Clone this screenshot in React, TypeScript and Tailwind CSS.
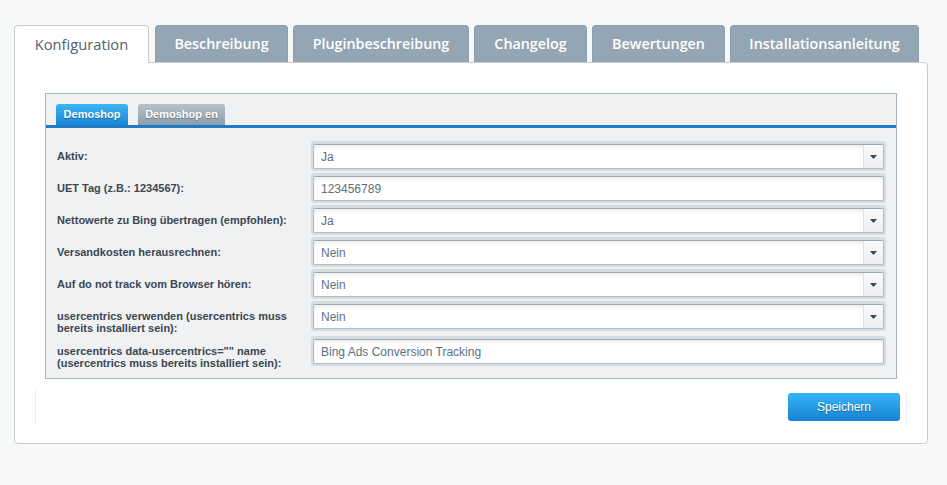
import React from "react";

const tabs = [
  { label: "Beschreibung", w: "w-[133px]" },
  { label: "Pluginbeschreibung", w: "w-[176px]" },
  { label: "Changelog", w: "w-[113px]" },
  { label: "Bewertungen", w: "w-[133px]" },
  { label: "Installationsanleitung", w: "w-[189px]" },
];

type Row = { label: string[]; value: string; select: boolean };

const rows: Row[] = [
  { label: ["Aktiv:"], value: "Ja", select: true },
  { label: ["UET Tag (z.B.: 1234567):"], value: "123456789", select: false },
  { label: ["Nettowerte zu Bing übertragen (empfohlen):"], value: "Ja", select: true },
  { label: ["Versandkosten herausrechnen:"], value: "Nein", select: true },
  { label: ["Auf do not track vom Browser hören:"], value: "Nein", select: true },
  {
    label: ["usercentrics verwenden (usercentrics muss", "bereits installiert sein):"],
    value: "Nein",
    select: true,
  },
  {
    label: ['usercentrics data-usercentrics="" name', "(usercentrics muss bereits installiert sein):"],
    value: "Bing Ads Conversion Tracking",
    select: false,
  },
];

function Field({ value, select }: { value: string; select: boolean }) {
  return (
    <div className="flex-1 rounded-[3px] bg-[#d7dce1] px-[2px] pt-[3px] pb-[2px]">
      <div className="flex h-[25px] items-stretch overflow-hidden rounded-[2px] border border-[#b3bdc7] border-t-[#9eabb7] bg-white shadow-[inset_0_2px_3px_rgba(0,0,0,0.08)]">
        <div className="flex flex-1 items-center pl-[7px] text-[12px] text-[#5e6f80]">{value}</div>
        {select && (
          <div className="flex w-[20px] items-center justify-center border-l border-[#dfe3e7] bg-gradient-to-b from-[#fbfbfb] to-[#ebedef]">
            <svg width="7" height="4" viewBox="0 0 7 4">
              <path d="M0 0 H7 L3.5 4 Z" fill="#40464d" />
            </svg>
          </div>
        )}
      </div>
    </div>
  );
}

export default function App() {
  return (
    <div
      className="min-h-[485px] w-[947px] bg-[#f7f8f8] pt-[25px]"
      style={{ fontFamily: '"Liberation Sans", Arial, sans-serif' }}
    >
      <div className="ml-[14px] w-[914px]">
        {/* Top tabs */}
        <div className="relative z-10 flex h-[37px] items-end gap-[5px]" style={{ fontFamily: '"Open Sans", sans-serif' }}>
          <div className="mr-[1px] flex h-[38px] w-[135px] translate-y-[1px] items-center justify-center rounded-t-[4px] border border-b-0 border-[#c9cccf] bg-white pb-[1px] text-[14.7px] text-[#56616c]">
            Konfiguration
          </div>
          {tabs.map((t) => (
            <div
              key={t.label}
              className={`${t.w} flex h-[37px] items-center justify-center rounded-t-[4px] border border-b-0 border-[#8c9eab] bg-[#94a6b3] text-[14.3px] font-semibold text-white`}
            >
              {t.label}
            </div>
          ))}
        </div>

        {/* Panel */}
        <div className="rounded-b-[4px] rounded-tr-[4px] border border-[#c9cccf] bg-white px-[20px] pt-[30px] pb-[19px]">
          <div className="mx-[10px] border border-[#a7b4c0] bg-[#eff1f3]">
            <div className="flex gap-[10px] pl-[10px] pt-[10px]">
              <div className="flex h-[21px] w-[72px] items-center justify-center rounded-t-[3px] bg-gradient-to-b from-[#3db4f2] to-[#1a88d6] text-[11px] font-bold text-white [text-shadow:0_1px_1px_rgba(0,0,0,0.35)]">
                Demoshop
              </div>
              <div className="flex h-[21px] w-[87px] items-center justify-center rounded-t-[3px] bg-gradient-to-b from-[#b6c1ca] to-[#8e9dab] text-[11px] font-bold text-white [text-shadow:0_1px_1px_rgba(0,0,0,0.3)]">
                Demoshop en
              </div>
            </div>
            <div className="h-[3px] bg-[#1f7bc6]" />
            <div className="pl-[11px] pr-[10px] pt-[12px] pb-[8px]">
              {rows.map((r, i) => (
                <div key={i} className="flex items-start py-[1px]">
                  <div className="w-[254px] pt-[9px] text-[11px] font-bold leading-[12px] text-[#3c4752]">
                    {r.label.map((l, j) => (
                      <div key={j}>{l}</div>
                    ))}
                  </div>
                  <Field value={r.value} select={r.select} />
                </div>
              ))}
            </div>
          </div>

          {/* Footer */}
          <div className="mt-[11px] flex h-[34px] items-start justify-end border-x border-[#eeeeee] pr-[6px] pt-[3px]">
            <button className="flex h-[28px] w-[112px] items-center justify-center rounded-[3px] bg-gradient-to-b from-[#33b5f6] to-[#1882d4] text-[12px] text-white [text-shadow:0_1px_1px_rgba(0,0,0,0.3)]">
              Speichern
            </button>
          </div>
        </div>
      </div>
    </div>
  );
}
